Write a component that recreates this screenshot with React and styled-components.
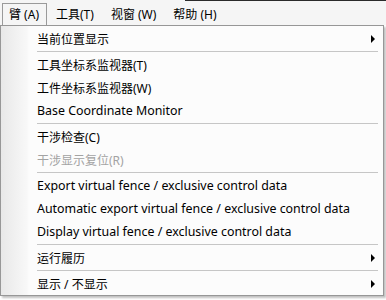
import styled, { createGlobalStyle } from "styled-components";

const GlobalStyle = createGlobalStyle`
  html, body {
    margin: 0;
    padding: 0;
    background: #ffffff;
  }
  body {
    font-family: "Noto Sans", "Noto Sans CJK SC", sans-serif;
    font-size: 12px;
    color: #000;
  }
`;

const BAR_ITEMS = [
  { label: "臂 (A)", active: true },
  { label: "工具(T)" },
  { label: "视窗 (W)" },
  { label: "帮助 (H)" },
];

const MENU = [
  { label: "当前位置显示", sub: true },
  { sep: true },
  { label: "工具坐标系监视器(T)" },
  { label: "工件坐标系监视器(W)" },
  { label: "Base Coordinate Monitor" },
  { sep: true },
  { label: "干涉检查(C)" },
  { label: "干涉显示复位(R)", disabled: true },
  { sep: true },
  { label: "Export virtual fence / exclusive control data" },
  { label: "Automatic export virtual fence / exclusive control data" },
  { label: "Display virtual fence / exclusive control data" },
  { sep: true },
  { label: "运行履历", sub: true },
  { sep: true },
  { label: "显示 / 不显示", sub: true },
];

const isLatin = (s) => /^[\x00-\x7F]+$/.test(s);

const App = () => {
  return (
    <>
      <GlobalStyle />
      <Window>
        <MenuBar>
          {BAR_ITEMS.map((item) => (
            <BarItem key={item.label} $active={item.active}>
              {item.label}
            </BarItem>
          ))}
        </MenuBar>
        <Dropdown>
          {MENU.map((item, i) =>
            item.sep ? (
              <Separator key={i} />
            ) : (
              <Item key={i} $disabled={item.disabled} $latin={isLatin(item.label)}>
                <span>{item.label}</span>
                {item.sub && <Arrow />}
              </Item>
            )
          )}
        </Dropdown>
      </Window>
    </>
  );
};

export default App;

const Window = styled.div`
  position: relative;
  width: 386px;
  height: 300px;
  overflow: hidden;
  background: #ffffff;
`;

const MenuBar = styled.div`
  position: relative;
  display: flex;
  align-items: flex-end;
  gap: 2px;
  height: 25px;
  padding-left: 2px;
  background: #f5f5f5;

  &::before {
    content: "";
    position: absolute;
    top: 0;
    left: 185px;
    right: 0;
    height: 1px;
    background: #2a2a2a;
  }
`;

const BarItem = styled.div`
  box-sizing: border-box;
  height: 22px;
  padding: 0 7px 0 6px;
  display: flex;
  align-items: center;
  line-height: 1;
  border: 1px solid ${(p) => (p.$active ? "#9a9a9a" : "transparent")};
  border-bottom: none;
  white-space: nowrap;
`;

const Dropdown = styled.div`
  position: absolute;
  top: 25px;
  left: 0;
  box-sizing: border-box;
  width: 384px;
  padding: 1px 1px 0 1px;
  border: 1px solid #979797;
  background: linear-gradient(90deg, #e8e8e8 0px, #f8f8f8 26px, #fcfcfc 28px);
  box-shadow: 2px 2px 2px rgba(0, 0, 0, 0.25);
`;

const Item = styled.div`
  display: flex;
  align-items: center;
  justify-content: space-between;
  height: 23px;
  padding: 0 7px 0 35px;
  white-space: nowrap;
  font-size: ${(p) => (p.$latin ? "12.4px" : "12px")};
  color: ${(p) => (p.$disabled ? "#a3a3a3" : "#000")};
`;

const Arrow = styled.i`
  width: 0;
  height: 0;
  border-left: 4px solid #000;
  border-top: 4px solid transparent;
  border-bottom: 4px solid transparent;
`;

const Separator = styled.div`
  height: 1px;
  margin: 1px 4px 1px 35px;
  background: #c6c6c6;
`;
